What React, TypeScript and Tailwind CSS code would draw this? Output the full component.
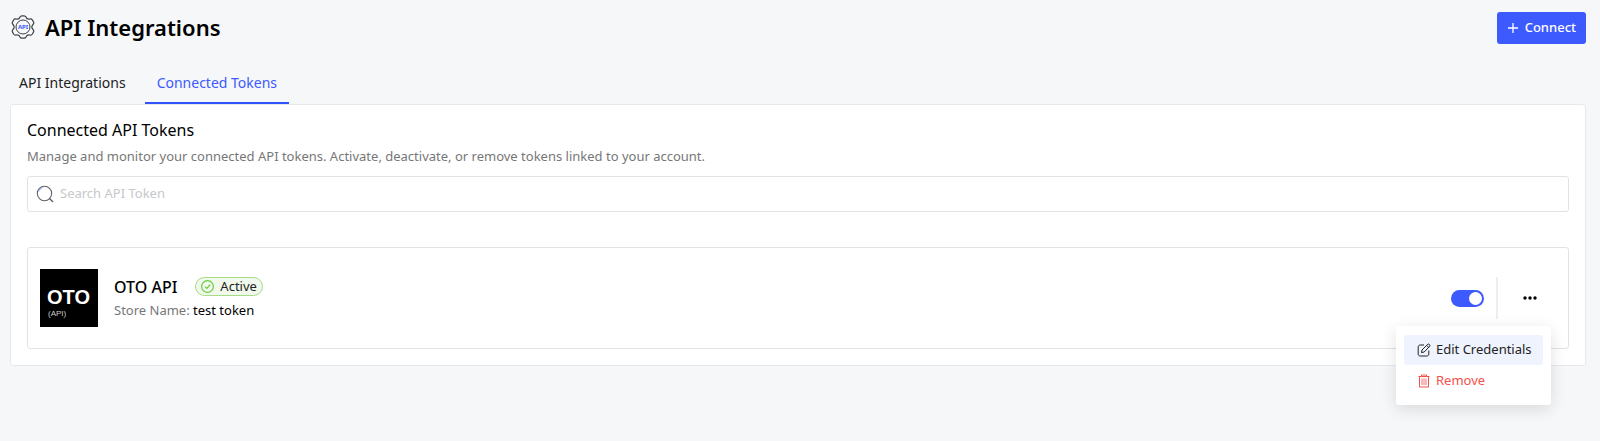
import { useState } from 'react';

const ApiGearIcon = () => (
  <svg viewBox="0 0 24 24" className="h-6 w-6 shrink-0" fill="none" stroke="#3f4248" aria-hidden="true">
    <path
      d="M9 2Q9.5 .8 11 .8H13Q14.5 .8 15 2C15.600 3.800 17 4.500 18.700 4C20 3.600 20.800 4 21.400 5L22.300 6.600C23 7.800 22.900 8.700 22 9.500C20.600 11 20.600 13 22 14.500C22.900 15.300 23 16.200 22.300 17.400L21.400 19C20.800 20 20 20.400 18.700 20C17 19.500 15.600 20.200 15 22Q14.500 23.200 13 23.200H11Q9.500 23.200 9 22C8.400 20.200 7 19.500 5.300 20C4 20.400 3.200 20 2.600 19L1.700 17.400C1 16.200 1.100 15.300 2 14.500C3.400 13 3.400 11 2 9.500C1.100 8.700 1 7.800 1.700 6.600L2.600 5C3.200 4 4 3.600 5.300 4C7 4.500 8.400 3.800 9 2Z"
      strokeWidth="1.2"
    />
    <circle cx="12" cy="12" r="7" />
    <text x="12" y="14" textAnchor="middle" fontSize="6" fontWeight="700" fill="#3d5afe" stroke="none">API</text>
  </svg>
);

const SearchIcon = () => (
  <svg viewBox="0 0 18 18" className="h-[18px] w-[18px] shrink-0" fill="none" aria-hidden="true">
    <circle cx="8.5" cy="8.5" r="7.2" stroke="#5f636b" strokeWidth="1.1" />
    <path d="M2.500 6.500a6.500 6.500 0 0 1 4-4" stroke="#8c9eff" />
    <path d="m13.3 13.3 3.700 3.700" stroke="#5f636b" strokeWidth="1.4" />
  </svg>
);

const CheckIcon = () => (
  <svg viewBox="0 0 14 14" className="h-[13px] w-[13px] shrink-0" fill="none" stroke="#6cc93c" strokeWidth="1.3" aria-hidden="true">
    <circle cx="7" cy="7" r="6.3" />
    <path d="m4.3 7.2 2 1.9 3.5-4" />
  </svg>
);

const EditIcon = () => (
  <svg viewBox="0 0 14 14" className="h-[14px] w-[14px] shrink-0" fill="none" stroke="#222" strokeLinejoin="round" aria-hidden="true">
    <path d="M7 2H3.2C2 2 1.2 2.8 1.2 4v7c0 1.2.8 2 2 2h6.6c1.2 0 2-.8 2-2V7.5" />
    <path d="m5 7 5.8-5.8c.8-.8 2.8 1 2 1.9L7.2 9l-2.7.6ZM9.7 2.4l2 2" />
  </svg>
);

const TrashIcon = () => (
  <svg viewBox="0 0 14 14" className="h-[14px] w-[14px] shrink-0" fill="none" stroke="#f4514c" aria-hidden="true">
    <path d="M1.5 2.500h11M4.5 2.500v-1.500h5v1.500M2.5 2.500v10.500h9v-10.500" />
    <path d="M5 4.5v6.500M7 4.5v6.500M9 4.5v6.500" strokeWidth="0.8" />
  </svg>
);

const tabs = ['API Integrations', 'Connected Tokens'];

const App = () => {
  const [activeTab, setActiveTab] = useState('Connected Tokens');
  const [search, setSearch] = useState('');
  const [enabled, setEnabled] = useState(true);
  const [menuOpen, setMenuOpen] = useState(true);

  return (
    <div className="min-h-screen bg-[#f5f7f9] pt-3 pr-[14px] pl-[10px] font-['Noto_Sans',sans-serif] text-black">
      <header className="flex items-start justify-between">
        <div className="flex items-center gap-[10px] pl-px">
          <ApiGearIcon />
          <h1 className="text-[22px] leading-[30px] font-semibold">API Integrations</h1>
        </div>
        <button
          type="button"
          className="flex h-8 items-center gap-[6px] rounded-[3px] bg-[#3d5afe] px-[10px] text-[13px] font-medium text-white"
        >
          <svg viewBox="0 0 12 12" className="h-3 w-3" stroke="currentColor" strokeWidth="1.3" aria-hidden="true">
            <path d="M6 1v10M1 6h10" />
          </svg>
          Connect
        </button>
      </header>

      {/* Tabs */}
      <nav className="mt-[19px] flex gap-[10px]">
        {tabs.map((tab) => (
          <button
            key={tab}
            type="button"
            onClick={() => setActiveTab(tab)}
            className={`h-[41px] border-b-2 text-[14px] ${
              activeTab === tab ? 'border-[#2f54ff] px-3 text-[#3d5afe]' : 'border-transparent px-[9px] text-[#222]'
            }`}
          >
            {tab}
          </button>
        ))}
      </nav>

      <main className="rounded-[3px] border border-[#e6e9ec] bg-white px-4 pt-[15px] pb-4">
        <h2 className="text-[16px] leading-5">Connected API Tokens</h2>
        <p className="mt-[6px] text-[13px] leading-5 text-[#777]">
          Manage and monitor your connected API tokens. Activate, deactivate, or remove tokens linked to your account.
        </p>

        <label className="mt-[10px] flex h-9 items-center gap-[6px] rounded-[3px] border border-[#e0e3e6] px-2">
          <SearchIcon />
          <input
            type="text"
            aria-label="Search API Token"
            placeholder="Search API Token"
            value={search}
            onChange={(e) => setSearch(e.target.value)}
            className="min-w-0 flex-1 text-[13px] outline-none placeholder:text-[#c6c8cb]"
          />
        </label>

        <section className="mt-[35px] flex h-[102px] items-center justify-between rounded-[3px] border border-[#e0e3e6] pr-[13px] pl-3">
          <div className="flex items-center gap-4">
            <svg viewBox="0 0 58 58" className="h-[58px] w-[58px] bg-black font-['Liberation_Sans',sans-serif]" role="img" aria-label="OTO API">
              <text x="7" y="35" fontSize="20" fontWeight="700" fill="#fff">OTO</text>
              <text x="8" y="47" fontSize="8" fill="#ccc">(API)</text>
            </svg>
            <div>
              <div className="flex items-center gap-[18px]">
                <h3 className="text-[16px] leading-5 font-medium">OTO API</h3>
                <span className="flex h-[19px] items-center gap-[6px] rounded-full border border-[#a5dc86] bg-[#f1f9ec] px-[5px] text-[13px] text-[#222]">
                  <CheckIcon />
                  Active
                </span>
              </div>
              <p className="mt-[3px] text-[13px] leading-5 text-[#777]">
                Store Name: <span className="text-black">test token</span>
              </p>
            </div>
          </div>

          <div className="flex items-center">
            <label className="flex cursor-pointer">
              <input
                type="checkbox"
                role="switch"
                aria-label="Token enabled"
                checked={enabled}
                onChange={(e) => setEnabled(e.target.checked)}
                className="peer sr-only"
              />
              <span className="flex h-[17px] w-[33px] items-center rounded-full bg-gray-300 px-[2px] peer-checked:justify-end peer-checked:bg-[#3d5afe]">
                <span className="h-[13px] w-[13px] rounded-full bg-white" />
              </span>
            </label>
            <div className="relative ml-3 flex h-[42px] items-center border-l-2 border-[#eceef0] pr-[17px] pl-6">
              <button type="button" aria-label="Token actions" onClick={() => setMenuOpen(!menuOpen)} className="p-px">
                <svg viewBox="0 0 14 4" className="h-1 w-[14px]" aria-hidden="true">
                  <circle cx="2" cy="2" r="1.7" />
                  <circle cx="7" cy="2" r="1.7" />
                  <circle cx="12" cy="2" r="1.7" />
                </svg>
              </button>
              {menuOpen && (
                <div className="absolute top-full right-1 z-10 mt-[7px] w-[155px] rounded-[3px] bg-white px-2 py-[9px] shadow-[0_4px_16px_rgba(0,0,0,0.12)]">
                  <button type="button" className="flex h-[30px] w-full items-center gap-[5px] rounded-[3px] bg-[#eff3fe] pl-[13px] text-[13px] whitespace-nowrap text-[#222]">
                    <EditIcon />
                    Edit Credentials
                  </button>
                  <button type="button" className="flex h-[31px] w-full items-center gap-[5px] pl-[13px] text-[13px] whitespace-nowrap text-[#f4514c]">
                    <TrashIcon />
                    Remove
                  </button>
                </div>
              )}
            </div>
          </div>
        </section>
      </main>
    </div>
  );
};

export default App;
